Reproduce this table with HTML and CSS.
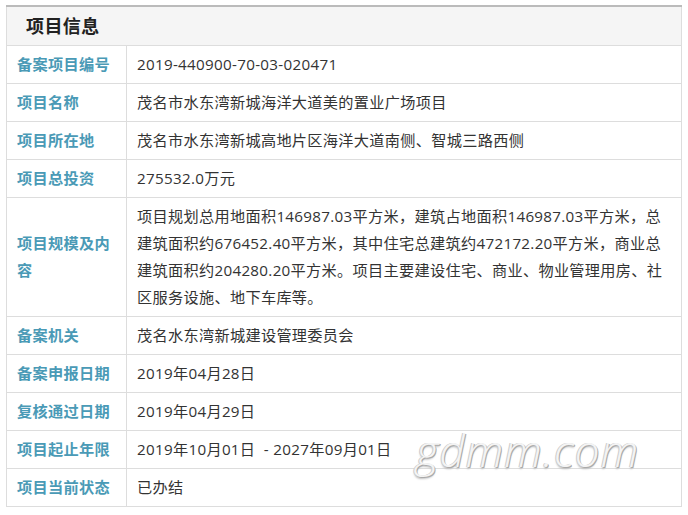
FILE: index.html
```html
<!DOCTYPE html>
<html lang="zh-CN">

<head>
  <meta charset="UTF-8">
  <meta name="viewport" content="width=device-width, initial-scale=1.0">
  <title>项目信息</title>
  <link rel="stylesheet" href="styles.css">
</head>

<body>
  <div class="wrap">
    <table class="info">
      <colgroup>
        <col class="col-label">
        <col class="col-value">
      </colgroup>
      <tr>
        <th colspan="2" class="head">项目信息</th>
      </tr>
      <tr>
        <td class="label">备案项目编号</td>
        <td class="value">2019-440900-70-03-020471</td>
      </tr>
      <tr>
        <td class="label">项目名称</td>
        <td class="value">茂名市水东湾新城海洋大道美的置业广场项目</td>
      </tr>
      <tr>
        <td class="label">项目所在地</td>
        <td class="value">茂名市水东湾新城高地片区海洋大道南侧、智城三路西侧</td>
      </tr>
      <tr>
        <td class="label">项目总投资</td>
        <td class="value">275532.0万元</td>
      </tr>
      <tr>
        <td class="label">项目规模及内容</td>
        <td class="value">项目规划总用地面积146987.03平方米，建筑占地面积146987.03平方米，总建筑面积约676452.40平方米，其中住宅总建筑约472172.20平方米，商业总建筑面积约204280.20平方米。项目主要建设住宅、商业、物业管理用房、社区服务设施、地下车库等。</td>
      </tr>
      <tr>
        <td class="label">备案机关</td>
        <td class="value">茂名水东湾新城建设管理委员会</td>
      </tr>
      <tr>
        <td class="label">备案申报日期</td>
        <td class="value">2019年04月28日</td>
      </tr>
      <tr>
        <td class="label">复核通过日期</td>
        <td class="value">2019年04月29日</td>
      </tr>
      <tr>
        <td class="label">项目起止年限</td>
        <td class="value">2019年10月01日 &nbsp;- 2027年09月01日</td>
      </tr>
      <tr>
        <td class="label">项目当前状态</td>
        <td class="value">已办结</td>
      </tr>
    </table>
    <!-- 水印 -->
    <div class="mark">gdmm.com</div>
  </div>
</body>

</html>
```

FILE: styles.css
```css
body {
  margin: 0;
  background: #fff;
  font-family: "Open Sans", "Noto Sans CJK SC", sans-serif;
  color: #333;
}
.wrap {
  position: relative;
  padding: 5px 0 0 6px;
  width: 684px;
  height: 515px;
  box-sizing: border-box;
}
.info {
  width: 676px;
  border-collapse: collapse;
  table-layout: fixed;
  font-size: 15.2px;
  letter-spacing: 0.3px;
}
.col-label {
  width: 120px;
}
.info td,
.info th {
  border: 1px solid #ddd;
  line-height: 27px;
  padding: 5px 10px;
  text-align: left;
  vertical-align: middle;
}
.head {
  border-top: 2px solid #bbb !important;
  background: #f5f5f5;
  font-size: 18px;
  font-weight: bold;
  color: #222;
  height: 28px;
  padding-left: 19px !important;
  letter-spacing: 0.4px;
}
.label {
  color: #4a9ab6;
  font-weight: bold;
}
.value {
  height: 27px;
}
.mark {
  position: absolute;
  left: 416px;
  top: 420px;
  font-family: "Open Sans", sans-serif;
  font-style: italic;
  font-weight: 300;
  font-size: 44px;
  color: #f4f4f4;
  text-shadow: 1px 1px 0 #aaa, -1px 0 0 #ccc, 0 2px 2px #bbb;
  letter-spacing: 1px;
}
```
